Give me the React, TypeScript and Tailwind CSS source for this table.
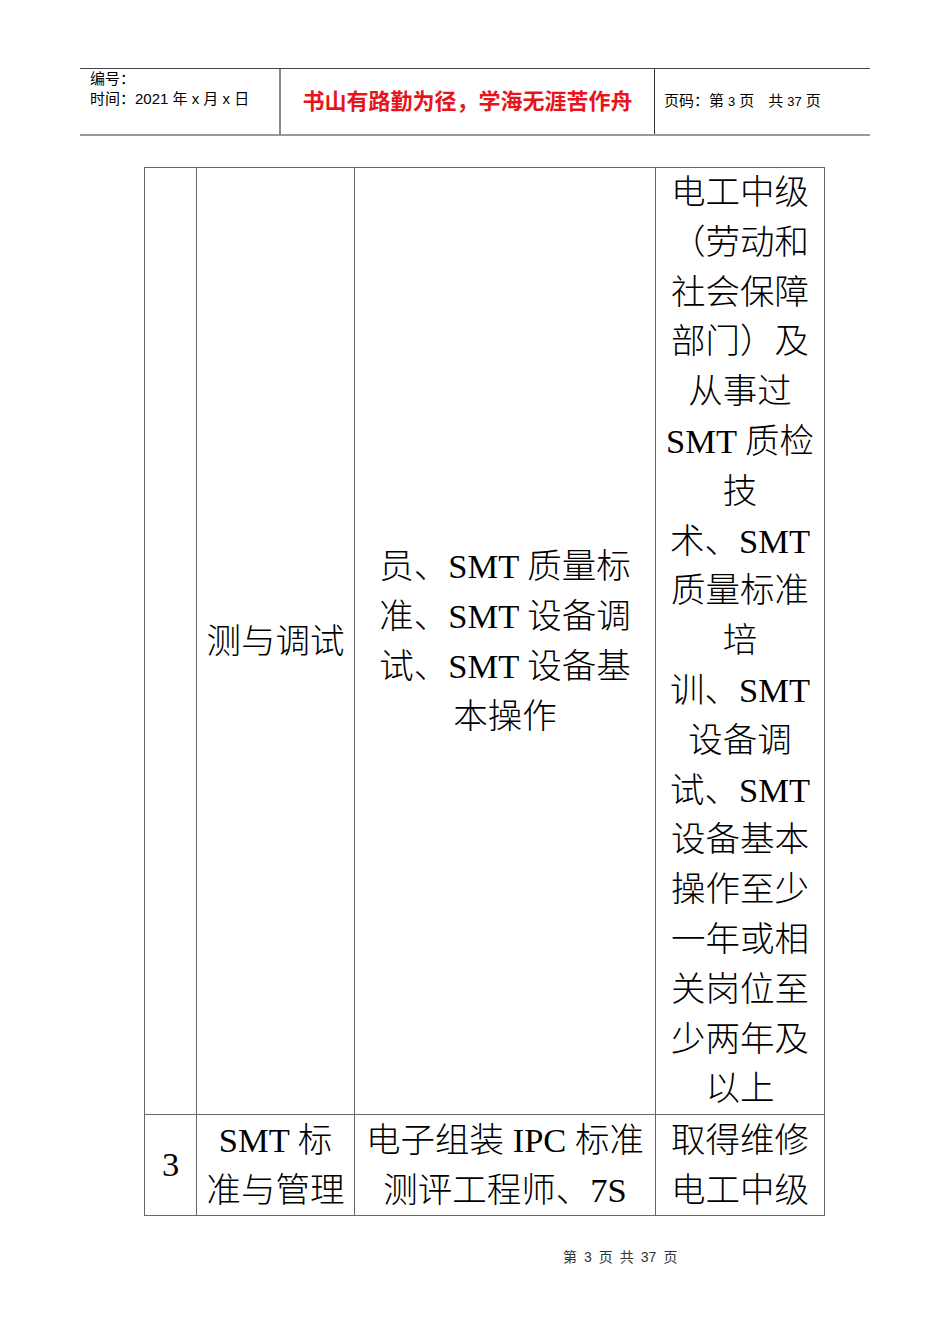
const serif = "font-['Liberation_Serif','Noto_Sans_CJK_SC',serif]";
const sans = "font-['Liberation_Sans','Noto_Sans_CJK_SC',sans-serif]";

const col4 = [
  "电工中级",
  "（劳动和",
  "社会保障",
  "部门）及",
  "从事过",
  "SMT 质检",
  "技",
  "术、SMT",
  "质量标准",
  "培",
  "训、SMT",
  "设备调",
  "试、SMT",
  "设备基本",
  "操作至少",
  "一年或相",
  "关岗位至",
  "少两年及",
  "以上",
];

const col3 = ["员、SMT 质量标", "准、SMT 设备调", "试、SMT 设备基", "本操作"];

function Lines({ lines }: { lines: string[] }) {
  return (
    <>
      {lines.map((l, i) => (
        <div key={i} className="whitespace-nowrap">
          {l}
        </div>
      ))}
    </>
  );
}

export default function App() {
  return (
    <div className="w-[950px] h-[1344px] overflow-hidden bg-white text-black">
      {/* header */}
      <div className={`ml-[80px] mt-[68px] w-[790px] h-[68px] flex border-t border-[#444] border-b-2 border-b-[#999] ${sans}`}>
        <div className="w-[201px] border-r-2 border-[#888] pl-[10px] text-[15px] leading-[20px]">
          <div>编号：</div>
          <div className="whitespace-nowrap">时间：2021 年 x 月 x 日</div>
        </div>
        <div className="w-[374px] border-r border-[#333] flex items-center justify-center text-[22px] font-bold text-[#e8141b] whitespace-nowrap">
          书山有路勤为径，学海无涯苦作舟
        </div>
        <div className="flex-1 flex items-center pl-[9px] text-[15px] whitespace-nowrap">
          页码：第<span className="text-[13px] mx-[4px]">3</span>页<span className="w-[14px]" />共<span className="text-[13px] mx-[4px]">37</span>页
        </div>
      </div>

      {/* table */}
      <table className={`ml-[144px] mt-[31px] border-collapse text-[34.5px] font-light ${serif}`}>
        <tbody>
          <tr className="h-[946px]">
            <td className="w-[52px] border border-[#666]"></td>
            <td className="w-[158px] border border-[#666] text-center leading-[50px] align-middle">
              <Lines lines={["测与调试"]} />
            </td>
            <td className="w-[301px] border border-[#666] text-center leading-[50px] align-middle">
              <Lines lines={col3} />
            </td>
            <td className="w-[169px] border border-[#666] text-center leading-[49.8px] align-top">
              <Lines lines={col4} />
            </td>
          </tr>
          <tr className="h-[100px]">
            <td className="border border-[#666] text-center align-middle">3</td>
            <td className="border border-[#666] text-center leading-[50px] align-middle">
              <Lines lines={["SMT 标", "准与管理"]} />
            </td>
            <td className="border border-[#666] text-center leading-[50px] align-middle">
              <Lines lines={["电子组装 IPC 标准", "测评工程师、7S"]} />
            </td>
            <td className="border border-[#666] text-center leading-[50px] align-middle">
              <Lines lines={["取得维修", "电工中级"]} />
            </td>
          </tr>
        </tbody>
      </table>

      {/* footer */}
      <div className={`mt-[31px] ml-[563px] text-[14px] text-[#333] flex gap-[7px] whitespace-nowrap ${serif}`}>
        <span>第</span>
        <span className={sans}>3</span>
        <span>页</span>
        <span>共</span>
        <span className={sans}>37</span>
        <span>页</span>
      </div>
    </div>
  );
}
